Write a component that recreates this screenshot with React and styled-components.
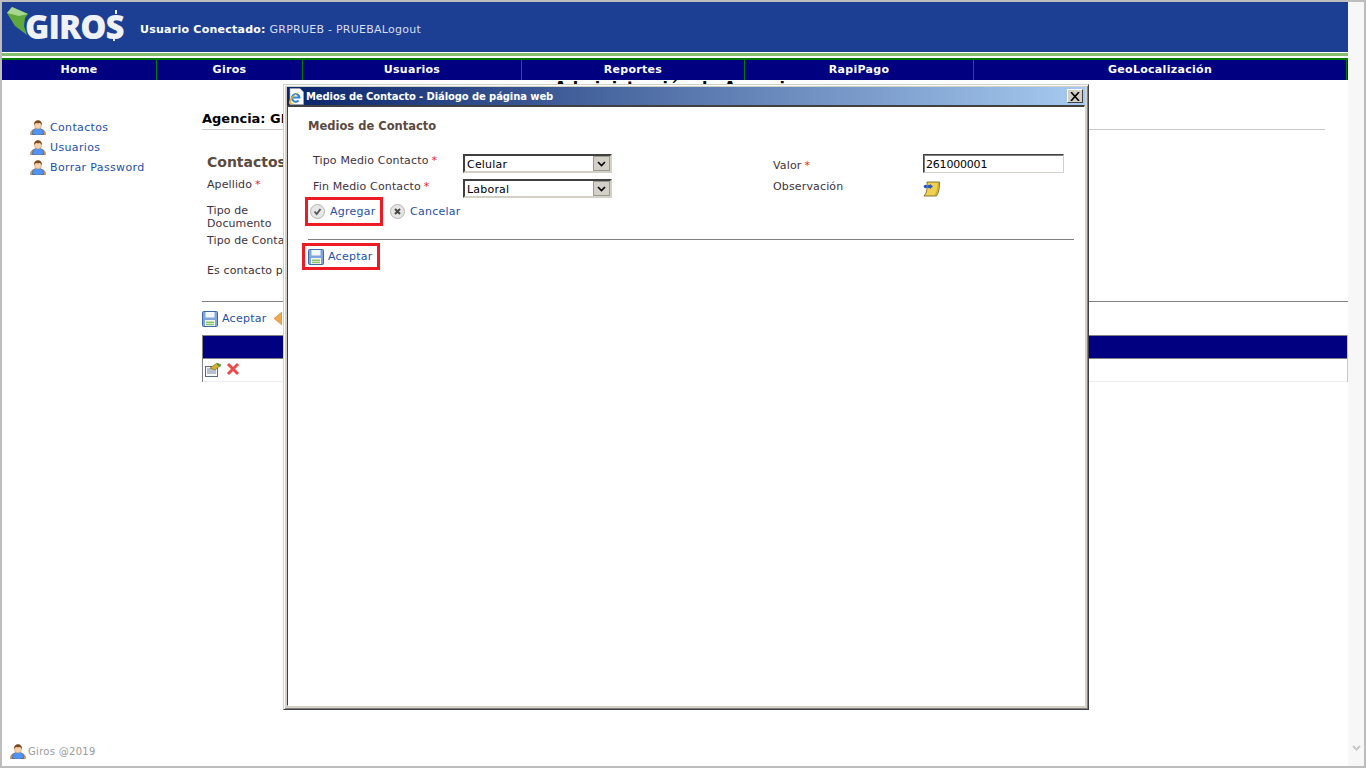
import React from "react";
import styled, { createGlobalStyle } from "styled-components";

const FONT = `"DejaVu Sans", Verdana, sans-serif`;

const GlobalStyle = createGlobalStyle`
	html, body {
		margin: 0;
		padding: 0;
		background: #ffffff;
		overflow: hidden;
	}
	* {
		box-sizing: border-box;
	}
	body {
		font-family: ${FONT};
		font-size: 11px;
	}
`;

const Frame = styled.div`
	position: relative;
	width: 1366px;
	height: 768px;
	border: 2px solid #bdbdbd;
	display: flex;
	overflow: hidden;
	background: #ffffff;
`;

const Page = styled.div`
	width: 1346px;
	display: flex;
	flex-direction: column;
`;

const Scrollbar = styled.div`
	flex: 1;
	background: #f7f7f7;
	display: flex;
	flex-direction: column;
	justify-content: flex-end;
	align-items: center;
	padding-bottom: 15px;
`;

const Header = styled.header`
	height: 50px;
	background: #1c3f94;
	display: flex;
	align-items: center;
	padding-left: 5px;
`;

const Logo = styled.div`
	position: relative;
	width: 133px;
	height: 50px;
`;

const LogoText = styled.span`
	position: absolute;
	left: 18px;
	top: 3px;
	font-family: "Open Sans", sans-serif;
	font-weight: 800;
	font-size: 33px;
	line-height: 44px;
	letter-spacing: -1px;
	color: #eef1f6;
`;

const LogoTick = styled.span`
	position: absolute;
	left: ${(p) => p.$left}px;
	top: ${(p) => p.$top}px;
	width: 2px;
	height: 4px;
	background: #eef1f6;
`;

const LogoLeaf = styled.svg`
	position: absolute;
	left: 0;
	top: 4px;
`;

const UserLine = styled.div`
	font-size: 11px;
	letter-spacing: 0.25px;
	color: #d8deee;
	padding-top: 4px;
`;

const UserLabel = styled.b`
	color: #ffffff;
`;

const GreenStripe = styled.div`
	height: 5px;
	margin-top: 1px;
	border-top: 3px solid #86bd6f;
`;

const Nav = styled.nav`
	height: 22px;
	background: #000080;
	border-top: 2px solid #007a00;
	display: flex;
`;

const NavItem = styled.a`
	width: ${(p) => p.$width}px;
	border-right: 1px solid #007a00;
	color: #ffffff;
	font-weight: bold;
	font-size: 11px;
	line-height: 19px;
	text-align: center;
	letter-spacing: 0.3px;
`;

const PageTitle = styled.div`
	height: 19px;
	margin-top: -1px;
	text-align: center;
	font-weight: bold;
	font-size: 16px;
	line-height: 18px;
	color: #000000;
`;

const Body = styled.div`
	flex: 1;
	display: flex;
`;

const Sidebar = styled.aside`
	width: 200px;
	padding: 21px 0 0 28px;
	display: flex;
	flex-direction: column;
	gap: 4px;
`;

const SideLink = styled.a`
	display: flex;
	align-items: center;
	gap: 4px;
	height: 16px;
	color: #1f4fa8;
	font-size: 11px;
	letter-spacing: 0.35px;
`;

const Content = styled.main`
	flex: 1;
	padding-top: 12px;
`;

const Agency = styled.div`
	width: 1123px;
	height: 20px;
	border-bottom: 1px solid #c8c8c8;
	font-weight: bold;
	font-size: 13px;
	line-height: 17px;
	color: #000000;
`;

const Contacts = styled.section`
	padding: 24px 0 0 5px;
	height: 172px;
	border-bottom: 1px solid #808080;
`;

const SectionTitle = styled.h3`
	margin: 0 0 7px;
	font-size: 14px;
	line-height: 17px;
	font-weight: bold;
	color: #5a4a3f;
`;

const FieldLabel = styled.div`
	color: #40323c;
	font-size: 11px;
	line-height: 13px;
	letter-spacing: 0.1px;
	width: ${(p) => p.$width || 70}px;
	height: ${(p) => p.$height || 13}px;
	margin-bottom: ${(p) => p.$gap || 0}px;
	white-space: ${(p) => (p.$wrap ? "normal" : "nowrap")};
`;

const Star = styled.span`
	color: #ee2222;
	margin-left: 3px;
`;

const ActionRow = styled.div`
	display: flex;
	align-items: center;
	gap: 4px;
	height: 33px;
`;

const ActionLink = styled.a`
	display: inline-flex;
	align-items: center;
	gap: ${(p) => p.$gap || 5}px;
	color: #1f4fa8;
	font-size: 11px;
	letter-spacing: 0.25px;
	margin-right: ${(p) => p.$right || 0}px;
`;

const Table = styled.div`
	border-right: 1px solid #c8c8c0;
	border-left: 1px solid #808080;
`;

const TableHead = styled.div`
	height: 24px;
	background: #000080;
	border-top: 1px solid #808080;
	border-bottom: 1px solid #808080;
`;

const TableRow = styled.div`
	height: 23px;
	display: flex;
	align-items: center;
	gap: 5px;
	padding: 0 0 2px 2px;
	border-bottom: 1px solid #eeeeee;
`;

const Footer = styled.footer`
	height: 17px;
	margin-bottom: 6px;
	padding-left: 8px;
	display: flex;
	align-items: center;
	gap: 2px;
	color: #9a9a9a;
	font-size: 10px;
	letter-spacing: 0.3px;
`;

/* ventana del dialogo, flota sobre la pagina */
const Dialog = styled.div`
	position: absolute;
	left: 281px;
	top: 82px;
	width: 806px;
	height: 626px;
	background: #d4d0c8;
	border: 1px solid;
	border-color: #d4d0c8 #404040 #404040 #d4d0c8;
	box-shadow: inset 1px 1px 0 #ffffff, inset -1px -1px 0 #808080;
	padding: 2px 3px 3px 3px;
	display: flex;
	flex-direction: column;
`;

const TitleBar = styled.div`
	height: 18px;
	background: linear-gradient(to right, #0a246a, #a6caf0);
	display: flex;
	align-items: center;
	padding: 0 2px 0 1px;
	gap: 2px;
	color: #ffffff;
	font-weight: bold;
	font-size: 10px;
	letter-spacing: -0.1px;
`;

const TitleText = styled.span`
	flex: 1;
`;

const CloseButton = styled.button`
	width: 16px;
	height: 14px;
	padding: 0;
	background: #d4d0c8;
	border: 1px solid;
	border-color: #ffffff #404040 #404040 #ffffff;
	display: flex;
	align-items: center;
	justify-content: center;
`;

const DialogBody = styled.div`
	flex: 1;
	background: #ffffff;
	border-style: solid;
	border-width: 2px 1px 1px 1px;
	border-color: #404040 #ffffff #ffffff #404040;
	padding: 12px 10px 0 15px;
`;

const DialogHeading = styled.h4`
	margin: 0 0 20px 5px;
	font-size: 11.5px;
	line-height: 15px;
	font-weight: bold;
	color: #5a4a3f;
`;

const FormGrid = styled.div`
	display: grid;
	grid-template-columns: 150px 310px 150px 141px;
	grid-auto-rows: 25px;
	padding-left: 10px;
`;

const FormLabel = styled.label`
	color: #40323c;
	font-size: 11px;
	line-height: 13px;
	letter-spacing: 0.15px;
	padding-top: ${(p) => p.$top || 0}px;
`;

const SelectBox = styled.div`
	position: relative;
	width: 149px;
	height: 19px;
	border: 2px solid;
	border-color: #404040 #d4d0c8 #d4d0c8 #404040;
	padding-left: 2px;
	font-size: 11px;
	line-height: 17px;
	letter-spacing: 0.2px;
	color: #000000;
`;

const SelectArrow = styled.span`
	position: absolute;
	right: 0;
	top: 0;
	width: 17px;
	height: 15px;
	background: #d4d0c8;
	border: 1px solid #9a9a90;
	display: flex;
	align-items: center;
	justify-content: center;
`;

const TextBox = styled.input`
	width: 141px;
	height: 19px;
	border: 1px solid;
	border-color: #404040 #d4d0c8 #d4d0c8 #404040;
	box-shadow: inset 1px 1px 0 #808080;
	outline: none;
	padding: 2px 0 0 2px;
	font-family: ${FONT};
	font-size: 11px;
	letter-spacing: -0.2px;
	color: #000000;
`;

const NoteCell = styled.div`
	padding-top: 2px;
`;

const DialogActions = styled.div`
	display: flex;
	align-items: center;
	margin: -7px 0 13px 0;
`;

const Marked = styled.div`
	display: inline-flex;
	align-items: center;
	border: 3px solid ${(p) => (p.$marked ? "#ed1c24" : "transparent")};
	height: ${(p) => p.$height}px;
	width: ${(p) => p.$width}px;
	padding-left: ${(p) => p.$pad || 0}px;
	margin-left: ${(p) => p.$left || 0}px;
`;

const Rule = styled.hr`
	margin: 0 0 3px 5px;
	border: 0;
	border-top: 1px solid #808080;
`;

const UserIcon = () => (
	<svg width="16" height="15" viewBox="0 0 16 15">
		<path d="M.5 14.500c0-2.500 1-4 3-5l1 5.500zM15.500 14.500c0-2.500-1-4-3-5l-1 5.500z" fill="#d89a58" stroke="#7a5530" strokeWidth=".5" />
		<path d="M2.500 14.500c-.3-3 1-5.500 3-6h5c2 .5 3.300 3 3 6z" fill="#4f94f5" stroke="#2b5caa" strokeWidth=".6" />
		<ellipse cx="8" cy="5" rx="3.600" ry="4" fill="#f4cfa8" stroke="#b8865c" strokeWidth=".4" />
		<path d="M4.200 5.300C3.600 1.600 6 .2 8 .2s4.400 1.400 3.800 5.100c-.4-1.300-1.200-2.100-2.300-2.300-1 .4-2 .4-3 0-1.100.2-1.900 1-2.300 2.300z" fill="#7d4a1e" />
	</svg>
);

const SaveIcon = () => (
	<svg width="16" height="16" viewBox="0 0 16 16">
		<path d="M.5 1.500a1 1 0 0 1 1-1h13a1 1 0 0 1 1 1v13a1 1 0 0 1-1 1h-13a1 1 0 0 1-1-1z" fill="#7fa6dc" stroke="#3d68aa" />
		<rect x="3.500" y="1" width="9" height="5.500" fill="#f4f7fb" />
		<rect x="3" y="9" width="10" height="6" fill="#f4f7f2" />
		<rect x="4" y="10.500" width="8" height="1.500" fill="#8cc46a" />
		<rect x="4" y="12.700" width="8" height="1.500" fill="#8cc46a" />
	</svg>
);

const CircleIcon = ({ kind }) => (
	<svg width="15" height="15" viewBox="0 0 15 15">
		<circle cx="7.500" cy="7.500" r="7" fill="#e6e6e4" stroke="#b4b4b0" />
		{kind === "check" ? (
			<path d="M4.500 7.500l2.200 2.500 3.800-5" fill="none" stroke="#555555" strokeWidth="1.800" />
		) : (
			<path d="M5 5l5 5M10 5l-5 5" fill="none" stroke="#444444" strokeWidth="2" />
		)}
	</svg>
);

const NoteIcon = () => (
	<svg width="17" height="16" viewBox="0 0 17 16">
		<path d="M4 1h12.500c0 6-.5 10-3 14H1c2.500-3 3.500-6 3-14z" fill="#f0d050" stroke="#6a5a10" strokeWidth=".8" />
		<path d="M12 14c2-2 3-6 3.500-12" fill="none" stroke="#c8a020" />
		<circle cx="2.500" cy="5.500" r="1.800" fill="#2c58b8" />
		<circle cx="6" cy="5.500" r="1.800" fill="#2c58b8" />
		<path d="M7 3l3 2.500L7 8z" fill="#2c58b8" />
	</svg>
);

const EditIcon = () => (
	<svg width="16" height="15" viewBox="0 0 16 15">
		<rect x=".5" y="4.500" width="12" height="10" fill="#f4f7fb" stroke="#5a6a80" />
		<path d="M2 7h9M2 9h9M2 11h9" stroke="#7a8aa0" />
		<path d="M5 6l7-5 4 2-6 5z" fill="#d8b030" stroke="#7a6a20" strokeWidth=".6" />
		<path d="M12 1l4 2-1 2-3-2z" fill="#4a9a40" />
	</svg>
);

const DeleteIcon = () => (
	<svg width="14" height="14" viewBox="0 0 14 14">
		<path d="M2 2l10 10M12 2L2 12" stroke="#ee4a4a" strokeWidth="3" />
	</svg>
);

const BackIcon = () => (
	<svg width="8" height="15" viewBox="0 0 8 15">
		<path d="M8 1L0 7.500 8 14z" fill="#f0a850" stroke="#c87820" strokeWidth=".6" />
	</svg>
);

const IeIcon = () => (
	<svg width="16" height="17" viewBox="0 0 16 17">
		<path d="M2 .5h10l3.500 3.500v12.500H2z" fill="#ffffff" stroke="#aaaaaa" strokeWidth=".6" />
		<path d="M4.500 9.500h7a3.800 3.800 0 1 0-1 3" fill="none" stroke="#2a86dc" strokeWidth="2" />
		<path d="M1 15.500C0 12.500 5 6 11.500 4 6.500 7 3.200 11 3 14c0 1 1 1.200 3.500.5-2.500 2-5 2-5.500 1z" fill="#f2b21e" />
	</svg>
);

const Chevron = ({ color = "#000000", width = 9, stroke = 1.600 }) => (
	<svg width={width} height="6" viewBox="0 0 9 6">
		<path d="M1 1l3.500 3.500L8 1" fill="none" stroke={color} strokeWidth={stroke} />
	</svg>
);

const NAV = [
	{ label: "Home", width: 155 },
	{ label: "Giros", width: 146 },
	{ label: "Usuarios", width: 219 },
	{ label: "Reportes", width: 223 },
	{ label: "RapiPago", width: 229 },
	{ label: "GeoLocalización", width: 373 },
];

const SIDE = ["Contactos", "Usuarios", "Borrar Password"];

export default function App() {
	return (
		<Frame>
			<GlobalStyle />
			<Page>
				<Header>
					<Logo>
						<LogoLeaf width="24" height="32" viewBox="0 0 24 32">
							<path d="M0 7l5-6 16 7-3 4-1 8 3 9-12-9z" fill="#5fa83c" />
							<path d="M0 7l5-6 16 7-9 2z" fill="#a8d890" />
						</LogoLeaf>
						<LogoTick $left={108} $top={8} />
						<LogoTick $left={106} $top={35} />
						<LogoText>GIROS</LogoText>
					</Logo>
					<UserLine>
						<UserLabel>Usuario Conectado:</UserLabel> GRPRUEB - PRUEBALogout
					</UserLine>
				</Header>
				<GreenStripe />
				<Nav>
					{NAV.map((item) => (
						<NavItem key={item.label} $width={item.width}>{item.label}</NavItem>
					))}
				</Nav>
				<PageTitle>Administración de Agencia</PageTitle>
				<Body>
					<Sidebar>
						{SIDE.map((text) => (
							<SideLink key={text}><UserIcon />{text}</SideLink>
						))}
					</Sidebar>
					<Content>
						<Agency>Agencia: GRP</Agency>
						<Contacts>
							<SectionTitle>Contactos</SectionTitle>
							<FieldLabel $gap={13}>Apellido<Star>*</Star></FieldLabel>
							<FieldLabel $wrap $height={26} $gap={4}>Tipo de Documento</FieldLabel>
							<FieldLabel $width={120} $gap={17}>Tipo de Contacto</FieldLabel>
							<FieldLabel $width={120}>Es contacto principal</FieldLabel>
						</Contacts>
						<ActionRow>
							<ActionLink $right={4} $gap={4}><SaveIcon />Aceptar</ActionLink>
							<BackIcon />
						</ActionRow>
						<Table>
							<TableHead />
							<TableRow><EditIcon /><DeleteIcon /></TableRow>
						</Table>
					</Content>
				</Body>
				<Footer><UserIcon />Giros @2019</Footer>
			</Page>
			<Scrollbar><Chevron color="#c8c8c8" width={11} stroke={2} /></Scrollbar>

			<Dialog>
				<TitleBar>
					<IeIcon />
					<TitleText>Medios de Contacto - Diálogo de página web</TitleText>
					<CloseButton>
						<svg width="10" height="9" viewBox="0 0 10 9">
							<path d="M1 0l8 9M9 0L1 9" stroke="#000000" strokeWidth="1.600" />
						</svg>
					</CloseButton>
				</TitleBar>
				<DialogBody>
					<DialogHeading>Medios de Contacto</DialogHeading>
					<FormGrid>
						<FormLabel>Tipo Medio Contacto<Star>*</Star></FormLabel>
						<SelectBox>Celular<SelectArrow><Chevron /></SelectArrow></SelectBox>
						<FormLabel $top={5}>Valor<Star>*</Star></FormLabel>
						<TextBox defaultValue="261000001" />
						<FormLabel $top={1}>Fin Medio Contacto<Star>*</Star></FormLabel>
						<SelectBox>Laboral<SelectArrow><Chevron /></SelectArrow></SelectBox>
						<FormLabel $top={1}>Observación</FormLabel>
						<NoteCell><NoteIcon /></NoteCell>
					</FormGrid>
					<DialogActions>
						<Marked $marked $width={78} $height={29} $pad={2} $left={2}>
							<ActionLink><CircleIcon kind="check" />Agregar</ActionLink>
						</Marked>
						<Marked $width={90} $height={29} $left={4}>
							<ActionLink><CircleIcon kind="cancel" />Cancelar</ActionLink>
						</Marked>
					</DialogActions>
					<Rule />
					<Marked $marked $width={78} $height={27} $pad={3} $left={-1}>
						<ActionLink $gap={4}><SaveIcon />Aceptar</ActionLink>
					</Marked>
				</DialogBody>
			</Dialog>
		</Frame>
	);
}
